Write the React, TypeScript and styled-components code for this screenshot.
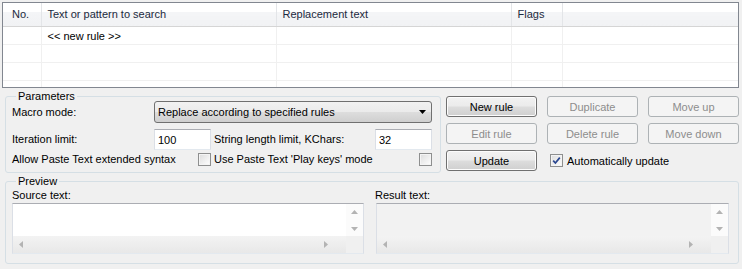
import styled, { createGlobalStyle } from "styled-components";

const GlobalStyle = createGlobalStyle`
  html, body {
    margin: 0;
    padding: 0;
    width: 742px;
    height: 269px;
    overflow: hidden;
    background: #f0f0f0;
  }
  body {
    font-family: "Liberation Sans", Arial, sans-serif;
    font-size: 11px;
    color: #000;
  }
`;

const Page = styled.div`
  display: flex;
  flex-direction: column;
  padding: 2px 3px 0 2px;
  width: 742px;
  box-sizing: border-box;
`;

/* ---------- rules list ---------- */

const ListFrame = styled.div`
  width: 737px;
  height: 86px;
  box-sizing: border-box;
  border: 1px solid #828790;
  background: #fff;
  overflow: hidden;
`;

const RulesTable = styled.table`
  border-collapse: collapse;
  table-layout: fixed;
  width: 100%;
`;

const HeadCell = styled.th<{ $w?: number; $first?: boolean }>`
  width: ${({ $w }) => ($w ? `${$w}px` : "auto")};
  height: 23px;
  padding: 0 0 0 ${({ $first }) => ($first ? 9 : 6)}px;
  box-sizing: border-box;
  text-align: left;
  font-weight: normal;
  color: #1c2a40;
  background: linear-gradient(#ffffff 0%, #ffffff 40%, #f4f5f7 41%, #f1f2f4 100%);
  border-right: 1px solid #e3e5e8;
  border-bottom: 1px solid #d5d5d5;
  white-space: nowrap;
  &:last-child {
    border-right: none;
  }
`;

const Cell = styled.td<{ $first?: boolean }>`
  height: 18px;
  padding: 2px 0 0 ${({ $first }) => ($first ? 9 : 6)}px;
  box-sizing: border-box;
  border-right: 1px solid #f0f0f0;
  border-bottom: 1px solid #f0f0f0;
  white-space: nowrap;
  &:last-child {
    border-right: none;
  }
`;

/* ---------- group boxes ---------- */

const GroupBox = styled.fieldset<{ $w?: number }>`
  margin: 0;
  box-sizing: border-box;
  width: ${({ $w }) => ($w ? `${$w}px` : "auto")};
  border: 1px solid #d5dfe5;
  border-radius: 3px;
  padding: 0 6px 0 6px;
  min-width: 0;
`;

const Legend = styled.legend`
  padding: 0 2px;
  margin-left: 4px;
  line-height: 12px;
  font-size: 11px;
`;

/* ---------- parameters ---------- */

const Middle = styled.div`
  display: flex;
  gap: 5px;
  margin-top: 2px;
  margin-left: 3px;
`;

const ParamsGrid = styled.div`
  display: grid;
  grid-template-columns: 142px 57px 164px 57px;
  grid-template-rows: 22px 27px 16px;
  margin-top: -1px;
  padding-bottom: 6px;
  align-items: end;
`;

const Label = styled.span<{ $indent?: number; $lift?: number }>`
  padding-left: ${({ $indent }) => $indent ?? 0}px;
  margin-bottom: ${({ $lift }) => $lift ?? 0}px;
  align-self: ${({ $lift }) => ($lift === undefined ? "center" : "end")};
  white-space: nowrap;
  line-height: 13px;
`;

const Combo = styled.div`
  grid-column: 2 / 5;
  height: 22px;
  box-sizing: border-box;
  border: 1px solid #707070;
  border-radius: 3px;
  background: linear-gradient(#f2f2f2 0%, #ebebeb 48%, #dddddd 52%, #cfcfcf 100%);
  display: flex;
  align-items: center;
  justify-content: space-between;
  padding: 0 5px 0 3px;
`;

const TextInput = styled.input`
  height: 21px;
  width: 57px;
  box-sizing: border-box;
  border: 1px solid #e3e9ef;
  border-top-color: #abadb3;
  border-left-color: #dbdfe6;
  border-right-color: #dbdfe6;
  background: #fff;
  font: inherit;
  padding: 0 3px;
  outline: none;
`;

const CheckBox = styled.span<{ $end?: boolean }>`
  width: 13px;
  height: 13px;
  box-sizing: border-box;
  border: 1px solid #8e8f8f;
  background: linear-gradient(135deg, #dcdcdc 0%, #f4f4f4 70%, #ffffff 100%);
  box-shadow: inset 0 0 0 1px #f4f4f4;
  justify-self: ${({ $end }) => ($end ? "end" : "start")};
  display: inline-flex;
  align-items: center;
  justify-content: center;
`;

/* ---------- buttons ---------- */

const ButtonGrid = styled.div`
  display: grid;
  grid-template-columns: 91px 91px 91px;
  grid-auto-rows: 21px;
  column-gap: 10px;
  row-gap: 6px;
  margin-top: 6px;
  align-items: center;
`;

const Button = styled.button<{ $disabled?: boolean }>`
  height: 21px;
  width: 91px;
  box-sizing: border-box;
  padding: 0;
  font: inherit;
  border-radius: 3px;
  border: 1px solid ${({ $disabled }) => ($disabled ? "#adb2b5" : "#707070")};
  color: ${({ $disabled }) => ($disabled ? "#8d8d8d" : "#000")};
  background: ${({ $disabled }) =>
    $disabled
      ? "#f4f4f4"
      : "linear-gradient(#f2f2f2 0%, #ebebeb 48%, #dddddd 52%, #cfcfcf 100%)"};
  box-shadow: inset 0 0 0 1px ${({ $disabled }) => ($disabled ? "#f4f4f4" : "#fcfcfc")};
`;

const AutoCheck = styled.label`
  grid-column: 2 / 4;
  display: flex;
  align-items: center;
  gap: 4px;
  padding-left: 3px;
  white-space: nowrap;
`;

/* ---------- preview ---------- */

const PreviewBox = styled(GroupBox)`
  margin: 2px 0 0 3px;
  padding: 0 9px 9px 6px;
`;

const PreviewGrid = styled.div`
  display: grid;
  grid-template-columns: 352px 353px;
  column-gap: 12px;
`;

const PreviewColumn = styled.div<{ $shift?: number }>`
  display: flex;
  flex-direction: column;
  & > span {
    margin-left: ${({ $shift }) => $shift ?? 0}px;
    height: 16px;
    line-height: 16px;
  }
`;

const ScrollBox = styled.div<{ $disabled?: boolean }>`
  height: 51px;
  box-sizing: border-box;
  border: 1px solid #e3e9ef;
  border-top-color: #abadb3;
  border-left-color: #dbdfe6;
  border-right-color: #dbdfe6;
  background: ${({ $disabled }) => ($disabled ? "#f2f2f2" : "#fff")};
  display: grid;
  grid-template-columns: 1fr 17px;
  grid-template-rows: 1fr 17px;
`;

const VBar = styled.div`
  display: flex;
  flex-direction: column;
  justify-content: space-between;
  align-items: center;
  padding: 6px 0 5px;
  background: #fbfbfb;
`;

const HBar = styled.div`
  display: flex;
  justify-content: space-between;
  align-items: center;
  padding: 0 18px 0 6px;
  background: linear-gradient(#f3f3f3, #e8e8e8);
`;

const Corner = styled.div`
  background: #f0f0f0;
`;

function Arrow({ dir }: { dir: "up" | "down" | "left" | "right" }) {
  const pts = {
    up: "0,4 3.5,0 7,4",
    down: "0,0 3.5,4 7,0",
    left: "4,0 0,3.5 4,7",
    right: "0,0 4,3.5 0,7",
  }[dir];
  const vertical = dir === "up" || dir === "down";
  return (
    <svg width={vertical ? 7 : 4} height={vertical ? 4 : 7} viewBox={vertical ? "0 0 7 4" : "0 0 4 7"}>
      <polygon points={pts} fill="#b3b3b3" />
    </svg>
  );
}

function TextArea({ disabled }: { disabled?: boolean }) {
  return (
    <ScrollBox $disabled={disabled}>
      <div />
      <VBar>
        <Arrow dir="up" />
        <Arrow dir="down" />
      </VBar>
      <HBar>
        <Arrow dir="left" />
        <Arrow dir="right" />
      </HBar>
      <Corner />
    </ScrollBox>
  );
}

const columns = [
  { title: "No.", w: 38 },
  { title: "Text or pattern to search", w: 235 },
  { title: "Replacement text", w: 235 },
  { title: "Flags", w: 51 },
  { title: "", w: 0 },
];

const rows = ["<< new rule >>", "", "", ""];

export default function App() {
  return (
    <>
      <GlobalStyle />
      <Page>
        <ListFrame>
          <RulesTable>
            <thead>
              <tr>
                {columns.map((c, i) => (
                  <HeadCell key={i} $w={c.w || undefined} $first={i === 0}>
                    {c.title}
                  </HeadCell>
                ))}
              </tr>
            </thead>
            <tbody>
              {rows.map((r, i) => (
                <tr key={i}>
                  <Cell $first />
                  <Cell>{r}</Cell>
                  <Cell />
                  <Cell />
                  <Cell />
                </tr>
              ))}
            </tbody>
          </RulesTable>
        </ListFrame>

        <Middle>
          <GroupBox $w={437}>
            <Legend>Parameters</Legend>
            <ParamsGrid>
              <Label>Macro mode:</Label>
              <Combo>
                <span>Replace according to specified rules</span>
                <svg width="7" height="4" viewBox="0 0 7 4">
                  <polygon points="0,0 7,0 3.5,4" fill="#000" />
                </svg>
              </Combo>

              <Label $lift={4}>Iteration limit:</Label>
              <TextInput defaultValue="100" />
              <Label $lift={4} $indent={3}>String length limit, KChars:</Label>
              <TextInput defaultValue="32" />

              <Label $lift={0}>Allow Paste Text extended syntax</Label>
              <CheckBox $end />
              <Label $lift={0} $indent={3}>Use Paste Text 'Play keys' mode</Label>
              <CheckBox $end />
            </ParamsGrid>
          </GroupBox>

          <ButtonGrid>
            <Button>New rule</Button>
            <Button $disabled>Duplicate</Button>
            <Button $disabled>Move up</Button>
            <Button $disabled>Edit rule</Button>
            <Button $disabled>Delete rule</Button>
            <Button $disabled>Move down</Button>
            <Button>Update</Button>
            <AutoCheck>
              <CheckBox>
                <svg width="9" height="9" viewBox="0 0 9 9">
                  <path d="M1.2 4.6 L3.4 7 L7.8 1.6" stroke="#2a4790" strokeWidth="1.7" fill="none" />
                </svg>
              </CheckBox>
              Automatically update
            </AutoCheck>
          </ButtonGrid>
        </Middle>

        <PreviewBox>
          <Legend>Preview</Legend>
          <PreviewGrid>
            <PreviewColumn>
              <span>Source text:</span>
              <TextArea />
            </PreviewColumn>
            <PreviewColumn $shift={-1}>
              <span>Result text:</span>
              <TextArea disabled />
            </PreviewColumn>
          </PreviewGrid>
        </PreviewBox>
      </Page>
    </>
  );
}
